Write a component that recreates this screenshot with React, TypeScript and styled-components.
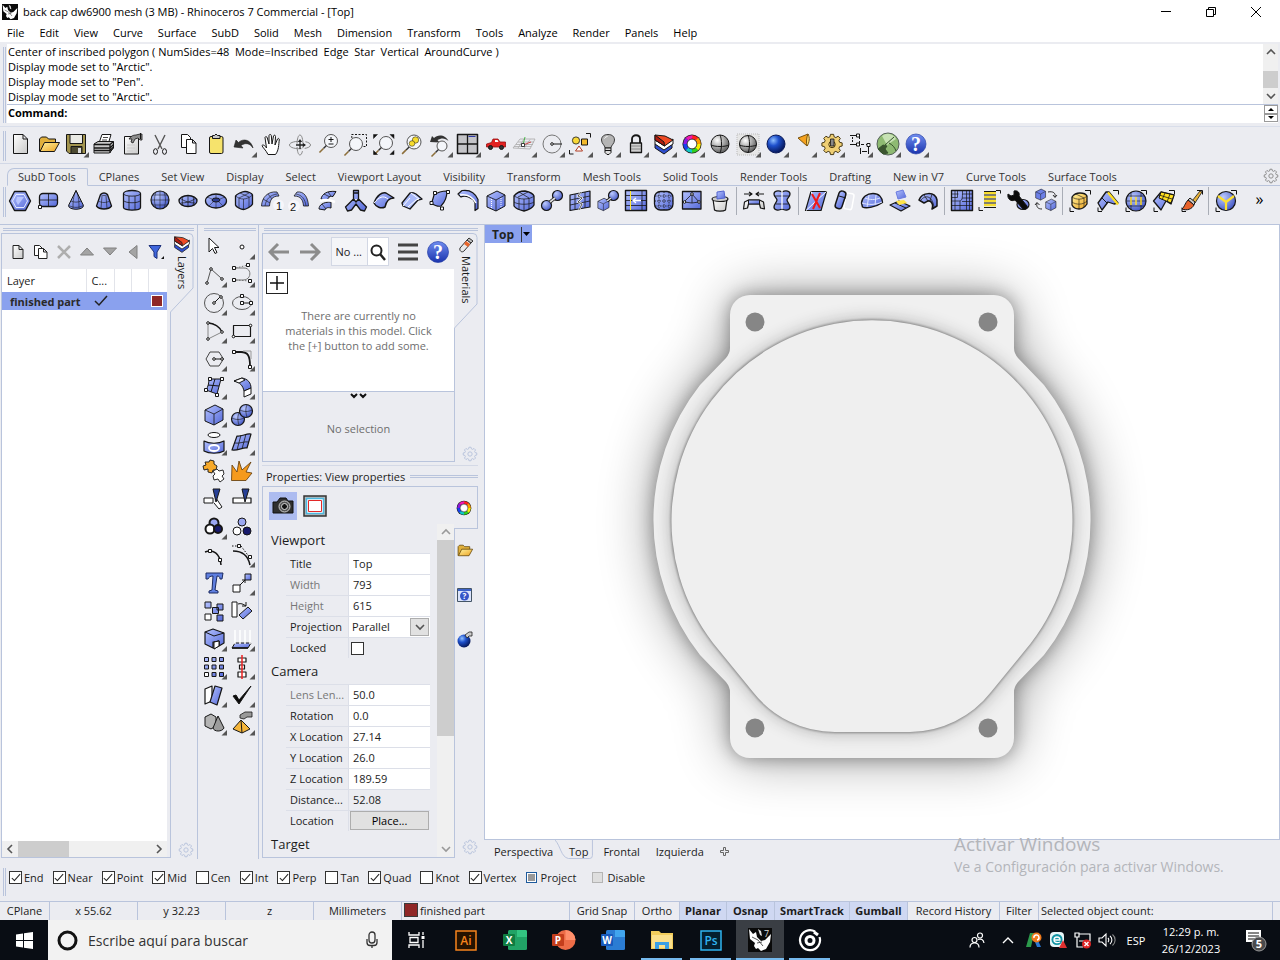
import React, { ReactNode } from 'react';
import styled, { createGlobalStyle, css } from 'styled-components';

const face = '#ebecf1';
const line = '#b9c4dc';
const ink = '#1c1c1c';
const accent = '#8aa1ee';

const GlobalStyle = createGlobalStyle`
  *, *::before, *::after { box-sizing: border-box; }
  body {
    margin: 0;
    background: ${face};
    color: ${ink};
    font-family: 'Open Sans', 'Noto Sans', sans-serif;
    font-size: 11px;
    line-height: 15px;
  }
  button, input, select {
    font: inherit;
    color: inherit;
    margin: 0;
    padding: 0;
    border: 0;
    background: none;
    border-radius: 0;
  }
  table { border-collapse: collapse; }
`;

/* ---------- drawings ---------- */

const B = 'url(#blue)';
const Y = 'url(#yellow)';
const G = 'url(#grey)';
const W = '#fff';

const SharedDefs = () => (
  <HiddenSvg aria-hidden="true">
    <defs>
      <linearGradient id="blue" x1="0" y1="0" x2="1" y2="1">
        <stop offset="0" stopColor="#b4c2ff" />
        <stop offset="1" stopColor="#5468d8" />
      </linearGradient>
      <linearGradient id="yellow" x1="0" y1="0" x2="1" y2="1">
        <stop offset="0" stopColor="#fff3a0" />
        <stop offset="1" stopColor="#eda321" />
      </linearGradient>
      <linearGradient id="grey" x1="0" y1="0" x2="1" y2="1">
        <stop offset="0" stopColor="#ffffff" />
        <stop offset="1" stopColor="#c9c9c9" />
      </linearGradient>
      <radialGradient id="ball" cx=".35" cy=".3" r=".75">
        <stop offset="0" stopColor="#bccaff" />
        <stop offset="1" stopColor="#4256c4" />
      </radialGradient>
      <radialGradient id="deep" cx=".35" cy=".3" r=".75">
        <stop offset="0" stopColor="#8fc0ff" />
        <stop offset=".4" stopColor="#1e50cc" />
        <stop offset="1" stopColor="#04124f" />
      </radialGradient>
      <radialGradient id="chrome" cx=".35" cy=".3" r=".8">
        <stop offset="0" stopColor="#ffffff" />
        <stop offset="1" stopColor="#4c4c4c" />
      </radialGradient>
      <linearGradient id="help" x1="0" y1="0" x2="0" y2="1">
        <stop offset="0" stopColor="#6f8df0" />
        <stop offset="1" stopColor="#1b34ad" />
      </linearGradient>
    </defs>
  </HiddenSvg>
);

const Corners = () => <path d="M17 1.500h5.500v4M2 18.500v4h4" stroke="#111" fill="none" />;

const Handle = ({ x, y }: { x: number; y: number }) => (
  <rect x={x - 1.5} y={y - 1.5} width="3" height="3" fill={W} />
);

const Dot = ({ x, y }: { x: number; y: number }) => <circle cx={x} cy={y} r="1.300" fill={W} />;

const wheelColours = ['#ff2020', '#ff9a00', '#f4f000', '#30d020', '#10c8c8', '#1840f0', '#8a18e0', '#f018b0'];
const Wheel = ({ r = 8 }: { r?: number }) => (
  <g>
    <circle cx="12" cy="12" r={r + 2.6} fill="#222" stroke="none" />
    <circle cx="12" cy="12" r={r - 2} fill={W} stroke="none" />
    {wheelColours.map((c, i) => {
      const a = (i * Math.PI) / 4 - Math.PI / 2;
      const b = a + Math.PI / 4 + 0.04;
      return (
        <path
          key={c}
          d={`M${12 + r * Math.cos(a)} ${12 + r * Math.sin(a)}A${r} ${r} 0 0 1 ${12 + r * Math.cos(b)} ${12 + r * Math.sin(b)}`}
          stroke={c}
          strokeWidth="3.600"
        />
      );
    })}
    <circle cx="12" cy="12" r={r - 2.2} strokeWidth=".7" />
  </g>
);

const Cube = ({ x = 0, y = 0, k = 1, fill = B }: { x?: number; y?: number; k?: number; fill?: string }) => (
  <g transform={`translate(${x} ${y}) scale(${k})`}>
    <path d="M3 7l10-5 8 4v11l-9 5-9-4z" fill={fill} />
    <path d="M3 7l9 4 9-5M12 11v11" strokeWidth=".8" />
  </g>
);

const Lens = ({ x, y, r = 6 }: { x: number; y: number; r?: number }) => (
  <g>
    <circle cx={x} cy={y} r={r} fill="#f4f6fa" stroke="#555" />
    <path d={`M${x - r * 0.7} ${y + r * 0.7}l-3 3`} stroke="#333" strokeWidth="1.400" />
    <path d={`M${x - r * 0.7 - 3} ${y + r * 0.7 + 3}l-4 4`} stroke="#8d6f3a" strokeWidth="1.600" />
  </g>
);

const Question = ({ r = 10.5 }: { r?: number }) => (
  <g>
    <circle cx="12" cy="12" r={r} fill="url(#help)" stroke="#2a42a8" strokeWidth=".7" />
    <text x="12" y="19" textAnchor="middle" fontFamily="Liberation Serif, serif" fontWeight="700" fontSize="20" fill={W} stroke="none">?</text>
  </g>
);

const Folder = () => (
  <g>
    <path d="M3.500 18.500V6l2-2h5l2 2h7v4" fill="#e0b03c" />
    <path d="M4 18.500l4.500-9H23.500l-5 9z" fill={Y} />
  </g>
);

const Cog = ({ fill = 'none', stroke = '#888' }: { fill?: string; stroke?: string }) => (
  <g fill={fill} stroke={stroke}>
    <path d="M10.300 2h3.400l.6 2.700 1.900.8 2.400-1.500 2.400 2.400-1.500 2.400.8 1.900 2.700.6v3.400l-2.700.6-.8 1.900 1.500 2.400-2.400 2.400-2.400-1.500-1.900.8-.6 2.700h-3.400l-.6-2.700-1.900-.8-2.400 1.500-2.400-2.400 1.500-2.400-.8-1.900L1 14.700v-3.400l2.700-.6.8-1.900L3 6.400 5.400 4l2.400 1.500 1.900-.8z" />
    <circle cx="12" cy="13" r="3.500" />
  </g>
);

const icons: Record<string, ReactNode> = {
  /* main toolbar */
  'New': <path d="M5.500 1.500h9.500l4.500 4.500v14.500h-14zM15 1.500V6h4.500" fill={G} />,
  'Open': <Folder />,
  'Save': (
    <g>
      <path d="M2.500 1.500h19v19H5l-2.500-2.500z" fill="#a3954e" />
      <path d="M6 1.500h12.500v9H6z" fill="#e9e9e4" />
      <path d="M7 13.500h11v7H7z" fill="#4d4a32" />
      <path d="M14 15h3v5h-3z" fill="#ddd" stroke="none" />
    </g>
  ),
  'Print': (
    <g>
      <path d="M7 10l3-8.500h9L16.500 10z" fill={W} />
      <path d="M11 4.500h5M10 7h5" strokeWidth=".8" />
      <path d="M2 11l4-2.500h15.500V15l-4 5H2z" fill="#c9c9c9" />
      <path d="M2 11.500h16v8.500M18 11.500l3.500-3M2 15h16l3.500-3.500M2 17.500h16l3.500-3.500" strokeWidth="1.300" />
    </g>
  ),
  'Document properties': (
    <g>
      <path d="M4.500 3.500h14v17.500h-14z" fill={G} />
      <path d="M7 12h8M7 15h8M7 18h6" stroke="#ccc" />
      <path d="M9 6c2-3 4-4 7-4l4-1h2v6h-2l-2-2-3 1-2 4-2-1 1-3z" fill="#8d8d8d" strokeWidth=".8" />
      <path d="M20.500 0v6" />
    </g>
  ),
  'Cut': (
    <g>
      <path d="M7 2l7 14M17 2l-7 14" strokeWidth="1.400" stroke="#555" />
      <ellipse cx="7.500" cy="18.500" rx="2" ry="2.800" />
      <ellipse cx="16.500" cy="18.500" rx="2" ry="2.800" />
    </g>
  ),
  'Copy': (
    <g>
      <path d="M5.500 1.500h6l3 3v10h-9z" fill={W} />
      <path d="M10.500 6.500h6l3.500 3.500v10.500h-9.500zM16.500 6.500V10h3.500" fill={W} />
    </g>
  ),
  'Paste': (
    <g>
      <rect x="5.500" y="3.500" width="13.500" height="17" rx="1.500" fill="#f6e36c" />
      <path d="M8.500 5.500v-3h2l1.500-1.500 1.500 1.500h2.500v3z" fill="#c8c8c8" />
    </g>
  ),
  'Undo': <path d="M2 14l2-7 2.500 2.500C11 5 19 6.500 21 15c-3-5-8-5.500-12-2.500L11 15z" fill="#333" stroke="#222" strokeWidth=".6" />,
  'Pan': (
    <path d="M8 21.500C6 17 2.500 14.500 2 12.500c1-1.200 3 0 4.500 2.500L5 4.500c.5-1.500 2-1 2.300.5L9 11V2.500c.4-1.500 2-1.300 2.300 0L12 11l1.500-8c.5-1.300 2-1 2 .5L15 12l2.500-6c.7-1 2-.6 1.800.8C18.500 12 19 17 15.500 21.500z" fill={W} />
  ),
  'Rotate view': (
    <g stroke="#888">
      <path d="M1.500 12c0-5 21-5 21 0s-21 5-21 0M12 2c4 0 4 20 0 20s-4-20 0-20" strokeDasharray="14 3" />
      <path d="M12 8v8M8 12h9" stroke="#222" strokeWidth="1.300" />
      <path d="M12 6l-2 3h4zM18 12l-3-2v4z" fill="#222" stroke="none" />
    </g>
  ),
  'Zoom dynamic': <g><Lens x={15} y={8} r={6.5} /><path d="M12.500 6.500h5M15 4v5M12.500 11h5" /></g>,
  'Zoom window': <g><path d="M7.500 1.500h15v12H9z" strokeDasharray="2 1.500" /><Lens x={12} y={11} r={6.5} /></g>,
  'Zoom extents': (
    <g>
      <Lens x={14} y={10} r={6.5} />
      <path d="M1.500 1.500h4l-4 4zM22 1.500h-4l4 4zM1.500 21.500v-4l4 4zM22 21.500h-4l4-4z" fill="#111" strokeWidth=".5" />
    </g>
  ),
  'Zoom selected': <g><Lens x={14} y={9} r={7} /><circle cx="15.500" cy="7" r="3.200" fill="#f7dc2e" strokeWidth=".5" /><circle cx="12" cy="10.500" r="2.800" fill="#f7dc2e" strokeWidth=".5" /></g>,
  'Undo view change': (
    <g>
      <path d="M2 9l2-6 2 2C10 .5 18 2 20.500 8c-3-3-7-3.500-11-1l2 2.500z" fill="#333" stroke="none" />
      <Lens x={14} y={13} r={5} />
    </g>
  ),
  'Four viewports': (
    <g>
      <path d="M1.500 1.500h20v19h-20z" fill="#c4c4c8" strokeWidth="1.500" />
      <path d="M11.500 1.500v19M1.500 11h20" strokeWidth="1.300" />
      <path d="M12.500 3.500h7" stroke="#2f3aa8" />
    </g>
  ),
  'Named views': (
    <g>
      <path d="M2.500 14v-3l5-1.500L9 6h5l2 3h5.500v5z" fill="#e32222" stroke="#941010" strokeWidth=".8" />
      <path d="M11 7h2.500l1 2H11z" fill={W} stroke="none" />
      <circle cx="6.500" cy="14.500" r="2" fill="#333" /><circle cx="17.500" cy="14.500" r="2" fill="#333" />
    </g>
  ),
  'Set CPlane': (
    <g stroke="#aaa" strokeWidth=".8">
      <path d="M1 15L8 6h15l-5 10zM4 11.500h17M6 15l6-9M12 15.500l6-9M2 13.500h17M6 9h16" />
      <path d="M11 12l8-3" stroke="#c22" /><path d="M11 12l2-8" stroke="#2a2" />
      <rect x="9.500" y="10.500" width="3" height="3" fill={W} stroke="#111" />
    </g>
  ),
  'Snap centre': <g><circle cx="12" cy="11" r="9" stroke="#777" /><path d="M13 11h9" /><Dot x={12} y={11} /></g>,
  'Select': (
    <g>
      <path d="M18 .500h4.500v4M1.500 17v4h4" />
      <circle cx="8" cy="7.500" r="3.600" fill="#f8d838" strokeWidth=".8" />
      <path d="M13.500 6h6v6h-6z" fill="#f2b92c" />
      <path d="M7.500 18l3.500-5 3.500 5z" fill={W} stroke="#b03a22" />
    </g>
  ),
  'Hide': (
    <g>
      <path d="M9 15c0-3-3.500-4-3.500-8C5.500 3.500 8 1.500 12 1.500S18.500 3.500 18.500 7c0 4-3.500 5-3.500 8z" fill="#b4b4b4" strokeWidth=".8" />
      <path d="M9 15h6v4.500l-2 2h-2l-2-2zM9 17.500h6" fill="#ddd" />
      <path d="M8.500 5.500c.5-1 1.500-1.800 3-2" stroke={W} />
    </g>
  ),
  'Lock': (
    <g>
      <path d="M8 10V6c0-5 8-5 8 0v4" strokeWidth="1.800" />
      <path d="M6.500 10h11v9.500h-11z" fill="#cfcfcf" strokeWidth="1.300" />
      <path d="M7 13h10M7 16h10" stroke="#888" />
    </g>
  ),
  'Layers': (
    <g>
      <path d="M3 11l9 4 8-6v6l-8 6-9-6z" fill="#2e4fd0" />
      <path d="M3 7l9 5 9-6v5l-9 6-9-6z" fill={W} />
      <path d="M3 2l10 1 8 4-8.500 6L3 7z" fill="#f04a24" />
      <path d="M3 2l9 7 .5 4L3 7z" fill="#b01c10" />
    </g>
  ),
  'Colour wheel': <g transform="translate(0 -1)"><Wheel r={7} /></g>,
  'Shade': <g><circle cx="12" cy="11" r="9" fill="url(#chrome)" /><path d="M3 12c4 2 14 2 18 0M12 2c2 4 2 14 0 18" /></g>,
  'Render preview': (
    <g>
      <path d="M1 1h22v21H1z" fill="#e6e6e6" stroke="#bbb" strokeDasharray="1 1" />
      <circle cx="12" cy="11" r="8.500" fill="url(#chrome)" /><path d="M3.500 12c4 2 13 2 17 0M12 2.500c2 4 2 13 0 17" />
    </g>
  ),
  'Render': <circle cx="12" cy="11" r="9" fill="url(#deep)" stroke="#0a1a5a" />,
  'Spotlight': <g><path d="M6 5l10-4-1 12z" fill="#f6a21e" stroke="#7a5310" /><path d="M16 1c2 3 1.500 9-1 12-1-3-.5-9 1-12z" fill="#ffdf70" stroke="#7a5310" /></g>,
  'Options': (
    <g>
      <g transform="translate(1 -.5) scale(.92)"><Cog fill="#efcf74" stroke="#3a2c08" /></g>
      <path d="M10.500 6h3.500v7h-3.500z" fill="#888" strokeWidth=".8" />
    </g>
  ),
  'Dimensions': (
    <g>
      <path d="M2 2.500h6M2 11.500h6" /><path d="M4.500 4v6" strokeDasharray="2 1" />
      <path d="M11.500 3v8.500H20" strokeDasharray="3 2" />
      <path d="M12.500 15v6M20.500 14v7M14 18.500h5" />
      <Handle x={10} y={2.5} /><Handle x={10} y={11.5} /><Handle x={20.5} y={12} />
    </g>
  ),
  'Grasshopper': (
    <g>
      <circle cx="12" cy="11" r="11" fill="#8eba72" stroke="#55605a" />
      <path d="M6 3a9 9 0 0 1 14 3l-9 6z" fill="#c7e2b4" stroke="none" />
      <path d="M2 16l5-4 4 1-2 3 3 4-5 1z" stroke="#33502a" fill="#3b5530" strokeWidth=".9" />
      <path d="M9 12l9-8M13 10c4 2 6 5 7 8" stroke="#33502a" />
    </g>
  ),
  'Help': <g transform="translate(0 -1)"><Question r={10} /></g>,

  /* SubD toolbar */
  'SubD face': (
    <g>
      <path d="M6.500 2.500h11L22.500 12l-5 9.500h-11L1.500 12z" fill={B} strokeWidth="1.400" />
      <path d="M8 5.500h8l3.500 6.500-3.500 6.500H8L4.500 12z" stroke="#e6ebff" />
      <path d="M9 8h7l-6 8-2-4z" fill="#b9c6ff" stroke="none" />
    </g>
  ),
  'SubD plane': <g><rect x="3.500" y="4.500" width="18" height="13" rx="3.500" fill={B} strokeWidth="1.300" /><path d="M12.500 4.500v13M3.500 11h18" strokeWidth=".8" /><Handle x={4} y={18} /></g>,
  'SubD cone': <g><path d="M12 1.500l7.500 15c0 5-15 5-15 0z" fill={B} /><path d="M12 1.500c-3 6-3 12-3 18M12 1.500c3 6 3 12 3 18M7 12c3 1.500 7 1.500 10 0M5 16.500c4 2.500 10 2.500 14 0" strokeWidth=".6" /></g>,
  'SubD truncated cone': <g><path d="M8.500 5.500c2-2 5-2 7 0l4 11.500c-3 4-12 4-15 0z" fill={B} strokeWidth="1.300" /><path d="M8.500 5.500c2 1.500 5 1.500 7 0M10 7l-1 12.500M14 7l1 12.500M6.500 12c3 2 8 2 11 0" strokeWidth=".6" /></g>,
  'SubD cylinder': <g><path d="M3.500 4.500c0-4 17-4 17 0v14c0 3.500-17 3.500-17 0z" fill={B} strokeWidth="1.300" /><path d="M3.500 4.500c0 3.500 17 3.500 17 0M3.500 11.500c2 3 15 3 17 0M9 7v14M15 7v14" strokeWidth=".8" /></g>,
  'SubD sphere': <g><circle cx="12" cy="11" r="9" fill="url(#ball)" strokeWidth="1.200" /><path d="M3 11h18M12 2v18M8 3c-2 5-2 11 0 16M16 3c2 5 2 11 0 16M5 6h14M5 16h14" strokeWidth=".5" /></g>,
  'SubD ellipsoid': <g><ellipse cx="12" cy="12" rx="9" ry="5.500" fill={B} strokeWidth="1.300" /><path d="M4 9c5 4 11 5 15 5M20 9c-5 4-11 5-15 5M12 6.500v11M7 7c-1 3-1 7 0 9.500M17 7c1 3 1 7 0 9.500" strokeWidth=".7" /></g>,
  'SubD torus': <g><ellipse cx="12" cy="12" rx="10.500" ry="7" fill={B} strokeWidth="1.300" /><ellipse cx="12" cy="11" rx="4" ry="2" fill="#2a3a90" /><path d="M12 13v6M3 8l5 2M21 8l-5 2M5 17l4-4M19 17l-4-4M12 5v4" strokeWidth=".5" /></g>,
  'SubD box': <g><path d="M3.500 7c1-2 7-4.500 9.500-4.500S20 4 20.500 6v9c-.5 2-6.500 5.500-9 5.500S4 18 3.500 16z" fill={B} strokeWidth="1.300" /><path d="M3.500 7c3 2 5 3 8 3s7-2 9-4M11.500 10v10.500M8 4l9 4v10M17 4L7 9v10" strokeWidth=".6" /></g>,
  'SubD degree one': (
    <g>
      <path d="M1.500 17C2 8 8 2 17 3l2 4c-7 0-9 4-9.500 10z" fill={B} strokeWidth=".8" /><path d="M5 17C6 10 10 6 17 5M3 10l7 4M8 5l4 5" strokeWidth=".6" />
      <circle cx="18.500" cy="16" r="5.500" fill="#f6f6fa" stroke="none" />
      <text x="16" y="21" fontSize="11" fill="#111" stroke="none" fontFamily="Liberation Sans, sans-serif">1</text>
    </g>
  ),
  'SubD degree two': (
    <g>
      <path d="M20.500 17C20 8 16 2 9 3L6 7c7 0 9 4 9.500 10z" fill={B} strokeWidth=".8" /><path d="M18 17C17 10 14 6 8 5" strokeWidth=".6" />
      <circle cx="6" cy="17" r="6" fill="#f6f6fa" stroke="none" />
      <text x="2" y="22" fontSize="11" fill="#111" stroke="none" fontFamily="Liberation Sans, sans-serif">2</text>
    </g>
  ),
  'SubD display': <g><path d="M5 10C6 5 11 1.500 20 2.500l-3 5c-4-.5-5 1-5.500 4z" fill={B} /><path d="M3 20c0-4 4-7 12-7v6c-4-1-5 0-6 2z" fill={B} /><path d="M4 12c6-2 10-1 15 1" stroke={W} strokeWidth="2.500" /><path d="M8 5l6 3M12 3l3 4M6 15l4 5" strokeWidth=".7" /></g>,
  'SubD multipipe': <path d="M9.500 1.500h5V10l8 8-2 4-4-1-4.500-6-4.500 6-4 1-2-4 8-8zM9.500 4h5M9.500 10l2.500 3 2.500-3" fill={B} strokeWidth="1.300" />,
  'SubD loft': <g><path d="M2 14C5 6 10 3 14 4l8 5c-6 0-8 4-9 9-4 2-9 0-11-4z" fill={B} strokeWidth="1.400" /><path d="M2 14c5-6 9-8 14-4" stroke={W} /></g>,
  'SubD sweep': <g><path d="M2 14l8-10c2-1 4 0 6 1l6 5-4 1-8 9-7-3z" fill="#a9b9f8" strokeWidth="1.300" /><path d="M10 9l-7 8M11 4l8 6-3 1-8 7" stroke={W} /></g>,
  'SubD edge': <g><path d="M6 6c4-3 9-4 13-4 0 7-2 11-6 15-3 1-7-1-10-3 2-2 2-5 3-8z" fill={B} strokeWidth="1.200" /><Handle x={7} y={4} /><Handle x={20} y={3} /><Handle x={3.5} y={14} /><Handle x={14} y={19.5} /></g>,
  'SubD revolve': <g><path d="M2 5l4-3.500c7-1 13 2 16 9v9l-3 2v-8C16 8 9 6 5 8z" fill={B} strokeWidth="1.200" /><path d="M4 6c6-1 12 1 16 8" stroke={W} strokeWidth="1.500" /></g>,
  'Box primitive': <g><Cube /><path d="M7.500 10v9M17 9v9" stroke={W} strokeDasharray="1 1" /></g>,
  'SubD subdivide': <g><path d="M2 7c3-4 7-5 11-5 5 1 8 2 9 5v9c-2 4-6 5-10 6-5-1-8-2-10-5z" fill={B} strokeWidth="1.300" /><path d="M2 7c4 2 6 3 10 3s8-1 10-3M12 10v12M7 9v11M17 9v11M2 13c4 3 16 3 20 0M7 3l10 6M16 3L6 8" strokeWidth=".7" /></g>,
  'SubD bridge': <g><circle cx="6.500" cy="16.500" r="5" fill="url(#ball)" strokeWidth="1.200" /><circle cx="17.500" cy="6.500" r="5" fill="url(#ball)" strokeWidth="1.200" /><path d="M10 13l5-4" stroke="#111" strokeWidth="3.500" /><path d="M10 13l5-4" stroke="#ddd" strokeWidth="1.800" /></g>,
  'SubD stitch': <g><path d="M2 6l20-4v16L2 21.500z" fill={B} strokeWidth="1.200" /><path d="M2 11l20-4M2 16l20-4M7 5v15.500M17 3v16" strokeWidth=".8" /><path d="M13 3l-3 4 4 2-4 4 4 2-3 6" stroke="#eee" strokeWidth="2" /><path d="M13 3l-3 4 4 2-4 4 4 2-3 6" strokeWidth=".7" /></g>,
  'SubD append': <g><g transform="translate(0 8)"><Cube k={0.62} /></g><circle cx="17.500" cy="6.500" r="5" fill="url(#ball)" strokeWidth="1.200" /><path d="M11 12l4-3" stroke="#111" strokeWidth="3" /><path d="M11 12l4-3" stroke="#ddd" strokeWidth="1.500" /></g>,
  'Insert edge': <g><path d="M1.500 1.500h21v20h-21z" fill={B} strokeWidth="1.400" /><path d="M1.500 6.500h21M1.500 11.500h21M1.500 16.500h21M18 1.500v20" strokeWidth=".8" /><path d="M6.500 2v19" stroke="#ffe838" /><path d="M17 11.500H9M12 9l-3 2.500 3 2.500" stroke={W} strokeWidth="1.300" /></g>,
  'Insert point': <g><rect x="2.500" y="2.500" width="18.500" height="18.500" rx="6" fill={B} strokeWidth="1.300" /><path d="M7 3v18M12 2.500V21M17 3v18M3 7h18M2.500 12H21M3 17h18" strokeDasharray="1.500 1" strokeWidth=".8" /></g>,
  'Crease': <g><path d="M2.500 2.500H21V20H2.500z" fill={B} strokeWidth="1.300" /><path d="M12 5l7 8-7 1-8-1zM12 5v9" strokeWidth=".8" /><Dot x={12} y={5} /><Dot x={19} y={13} /><Dot x={4.5} y={13} /></g>,
  'Delete faces': <g><path d="M5 10l1.500 11c2 1.500 9 1.500 11 0L19 10z" fill={G} strokeWidth="1.200" /><ellipse cx="12" cy="10" rx="8" ry="2.500" fill="#ccc" strokeWidth="1.200" /><path d="M9 3l7-1 1 7-8 1z" fill={B} stroke="#5364cf" /></g>,
  'Bridge gap': <g><path d="M2 5h7M22 5h-7M7 3l3 2-3 2M17 3l-3 2 3 2" strokeWidth="1.200" /><path d="M1.500 20l1-7 4-2h11l4 2 1 7-4-1-1-4H6.500l-1 4z" fill={G} strokeWidth="1.200" /><path d="M6.500 11h11v4h-11z" fill={B} /></g>,
  'Symmetry': <g><path d="M4 5c0-3 4-4 8-2 4-2 8-1 8 2s-3 4-3 6 3 4 3 7-4 4-8 2c-4 2-8 1-8-2s3-5 3-7-3-3-3-6z" fill={B} strokeWidth="1.300" /><path d="M5 7h14M6 15h12" strokeWidth=".8" /><path d="M12 2v18" stroke={W} strokeWidth="1.300" /></g>,
  'Delete face': <g><path d="M7 2.500h15.500L17 21.500H1.500z" fill={B} strokeWidth="1.200" /><path d="M7 2.500L12 12l10.500-9.500M12 12L2 21.500" stroke={W} /><path d="M8 5l8 14M16 4L9 20" stroke="#f01818" strokeWidth="2" /></g>,
  'Thicken': <g><rect x="13" y="4" width="8" height="16" rx="2" transform="rotate(10 15 12)" stroke={W} strokeWidth="1.500" /><rect x="5" y="2" width="7" height="18" rx="3" transform="rotate(18 9 11)" fill={B} strokeWidth="1.500" /><path d="M7 7l7 2" /></g>,
  'Smooth': <g><path d="M1.500 14C2 8 7 4.500 13 4.500s9.500 4 9.500 9C16 18 6 20 2.500 18z" fill={B} strokeWidth="1.400" /><path d="M2 14c6 2 14 2 20-1M9 6l-2 12M16 6l-1 10M5 9c5 2 10 2 15 0" stroke="#dfe6ff" /></g>,
  'Extract': <g><path d="M2 16l9-4 11 5-9 5z" fill={B} strokeWidth="1.200" /><path d="M7 14l11 5" /><path d="M8 12l8-1 3 3-8 2z" fill="#ffe44a" stroke="none" /><path d="M8 3l7-2 3 7-8 2z" fill={B} stroke="#6b7be0" /></g>,
  'Offset': <g><path d="M3 11C6 3 19 2 21 11v6l-5 3c2-6-2-10-6-7l-2 1z" fill={B} strokeWidth="1.500" /><path d="M5 11c4-5 11-5 13 7M8 6l4 6M16 5l-2 7" stroke="#222" strokeWidth=".8" /></g>,
  'Quad remesh': <g><path d="M1.500 1.500h21v20h-21z" fill={B} strokeWidth="1.400" /><path d="M1.500 16.500h21M1.500 12h7c4 0 4-2 4-10.500M1.500 8.500h6V1.500M5 1.500v20M16.500 1.500v20M10 12v10M19.500 1.500v20M1.500 5h7M12 9h10M12 5h10M12 12.500h10" strokeWidth=".7" /></g>,
  'Select list': <g><path d="M18 1.500h4.500v3M1 18v3.500h4" /><path d="M6 4h12M6 8h12M6 12h12M6 16h12" stroke="#f7dd30" strokeWidth="2.400" /><path d="M6 2.500h12M6 6h12M6 10h12M6 14h12M6 18.500h12" /></g>,
  'Repair': <g><ellipse cx="17" cy="15.500" rx="6" ry="5" fill={B} strokeWidth="1.200" /><path d="M2 5l3 2 3-1V2c4-1 6 2 5 5l8 10c1 3-2 4-4 3L9 11C5 13 1 10 2 5z" fill="#0b0b0b" /></g>,
  'Convert': <g><g transform="translate(0 -1)"><Cube k={0.55} fill="#6c7fe6" /></g><g transform="translate(10 9)"><Cube k={0.57} /></g><path d="M14 3c5-1 8 1 7 5M19 6l2 2.500L23 6M8 20c-4 0-6-2-5-6M1 16l2-2.500L5.500 16" strokeWidth=".9" /></g>,
  'Select SubD': <g><Corners /><path d="M4 8c2-3 5-4 8-4s6 1 7 3v8c-2 3-5 5-8 5s-6-2-7-4z" fill={Y} strokeWidth="1.300" /><path d="M4 8c4 3 11 3 15-1M11 10v10M4 13c4 3 11 3 15-1M8 5l8 4v9" strokeWidth=".6" /></g>,
  'Select edges': <g><Corners /><path d="M2 14L10 3h3l9 11-4 1-6-2-6 8z" fill={B} strokeWidth="1.300" /><path d="M12 3.500l10 12" stroke="#ffdf20" strokeWidth="2.200" /><path d="M6 9l5 5" /></g>,
  'Select faces': <g><Corners /><circle cx="12" cy="12" r="10" fill="url(#ball)" strokeWidth="1.200" /><path d="M2 12h20M3 7h18M3 17h18M7 3v18M17 3v18" strokeWidth=".6" /><path d="M7 8v8M12 8v8M17 8v8" stroke="#ffe030" strokeWidth="1.500" /></g>,
  'Select loop': <g><Corners /><path d="M1.500 12L9 3l13 3-3 9-5-3-5 9z" fill={B} strokeWidth="1.300" /><path d="M9 3l13 3-3 8-12-5z" fill="#ffdf20" /><path d="M7 6l13 4M13 4l-3 7M18 5l-3 8" strokeWidth=".8" /></g>,
  'Select brush': <g><Corners /><path d="M12 12l8-10 2 1-7 11z" fill="#e8b23a" strokeWidth=".8" /><path d="M8 11l6 5 1-3-5-4z" fill="#c8c8c8" /><path d="M2 20c2-1 3-6 6-9l6 5c-2 4-7 6-12 4z" fill="#e8622a" /></g>,
  'Select ring': <g><Corners /><circle cx="12" cy="12" r="9.500" fill="url(#ball)" strokeWidth="1.200" /><path d="M12 21v-8L4 7M12 13l8-6" stroke="#ffe030" strokeWidth="2.200" /></g>,

  /* side palette */
  'Pointer': <path d="M9 4v14l3.500-3.500 2.500 5 2-1-2.500-5h4.500z" fill={W} transform="translate(-2 -1)" />,
  'Point': <circle cx="12" cy="12" r="2" fill={W} />,
  'Polyline': <g><path d="M5 20l4-14 10 9" stroke="#555" /><Dot x={5} y={20} /><Dot x={9} y={6} /><Dot x={20} y={16} /></g>,
  'Curve': <g><path d="M4 5h10c8 0 8 12-1 12H4" stroke="#777" /><path d="M6 5l12-3M6 17l14 1" strokeDasharray="1.500 1.500" stroke="#777" /><Handle x={4} y={5} /><Handle x={18} y={2} /><Handle x={4} y={17} /><Handle x={20} y={18} /></g>,
  'Circle': <g><circle cx="12" cy="12" r="9.500" stroke="#555" /><path d="M12 12l6-6" /><Dot x={12} y={12} /><Dot x={19} y={6} /></g>,
  'Ellipse': <g><ellipse cx="12" cy="12" rx="9.500" ry="6.500" stroke="#555" /><path d="M12 12h9" /><Handle x={12} y={12} /><Handle x={12} y={5} /><Handle x={21} y={12} /></g>,
  'Arc': <g><path d="M6 20V4c6 0 12 4 14 9z" stroke="#888" /><path d="M6 4c6 0 12 4 14 9" strokeWidth="1.300" /><Dot x={6} y={4} /><Dot x={20} y={13} /><Dot x={6} y={20} /></g>,
  'Rectangle': <g><path d="M3.500 6.500h17v11h-17z" strokeWidth="1.200" /><Dot x={20.5} y={6.5} /><Dot x={3.5} y={17.5} /></g>,
  'Polygon': <g><path d="M8 5h9l4.500 7-4.500 7H8l-4-7z" stroke="#444" /><path d="M12 12h9" /><Dot x={12} y={12} /><Dot x={20} y={12} /></g>,
  'Fillet curves': <g><path d="M4 5h7c7 0 9 4 9 14" strokeWidth="1.800" /><path d="M13 4h8v8" stroke="#999" /><Handle x={4} y={5} /><Handle x={20} y={20} /></g>,
  'Surface from points': <g><path d="M7 4h12l-4 15-11-4c2-3 3-7 3-11z" fill={B} /><path d="M13 4l-4 13M6 10l11 1" /><Handle x={8} y={4} /><Handle x={20} y={4} /><Handle x={4} y={15} /><Handle x={15} y={20} /></g>,
  'Fillet surface': <g><path d="M4 6l8-3c6 1 9 5 9 10l-7 3C13 11 10 7 4 6z" fill={B} /><path d="M4 6l8-3 3 2-6 3zM21 13v6l-7 3v-6z" fill={W} /></g>,
  'Box': <Cube />,
  'Boolean union': <g><circle cx="8" cy="16" r="6.500" fill="url(#ball)" strokeWidth="1.200" /><circle cx="16" cy="8" r="6.500" fill="url(#ball)" strokeWidth="1.200" /><path d="M2 15c4 2 8 2 12 0M10 7c4 2 8 2 12 0M9 10c-2 4-1 9 0 12M17 2c-2 4-1 9 0 12" strokeWidth=".6" /></g>,
  'Project to surface': <g><ellipse cx="12" cy="4" rx="6" ry="2.500" fill={W} /><path d="M2 10c5 3 15 3 20 0v10c-5 3-15 3-20 0z" fill={B} strokeWidth="1.200" /><ellipse cx="12" cy="17" rx="5" ry="3" stroke={W} strokeWidth="1.800" /></g>,
  'Mesh': <g><path d="M7 5c5 1 9-3 14-2l-4 14c-4-1-9 3-15 2z" fill={B} strokeWidth="1.200" /><path d="M4 12c6 1 10-2 15-1M11 4L7 19M16 3l-4 15" strokeWidth=".8" /></g>,
  'Join': <g><path d="M3 3h4l1-2 4 1v3l3 2-1 4h-3l-1 3-4-1v-3l-4 1-1-4 3-1z" fill="#f6a92a" strokeWidth=".9" /><path d="M11 12l4-2 2 2 4-1 1 4-2 2 2 3-4 3-2-3-4 1-1-4 2-2z" fill={W} strokeWidth=".9" /></g>,
  'Explode': <path d="M1.500 21.500L2 6l5 7 2-11 3 9 9-8-5 10 6 1-6 7.500z" fill="#f59a1c" stroke="#5c3606" strokeWidth=".8" />,
  'Trim': <g><path d="M2 11h9v5H2zM14 11l6 9-3 2-5-6" fill={W} /><path d="M11 2h7l-4 13z" fill="#263f96" /></g>,
  'Split': <g><path d="M3 11h18v5H3z" fill={W} strokeWidth="1.200" /><path d="M12 2h7l-4 13z" fill="#263f96" /></g>,
  'Group': <g><circle cx="12" cy="8" r="4.500" fill="#9ba8f2" strokeWidth="2" /><circle cx="8" cy="14" r="4.500" fill={W} strokeWidth="2" /><circle cx="16" cy="14" r="4" fill="#181a6c" strokeWidth="2" /></g>,
  'Ungroup': <g><circle cx="12" cy="7" r="4" fill="#9ba8f2" /><circle cx="7" cy="16" r="4" fill={W} /><circle cx="17" cy="16" r="4" fill="#181a6c" /></g>,
  'Edit points': <g><path d="M3 9c8-3 15 1 16 13" strokeWidth="1.500" /><Handle x={8} y={8} /><Handle x={18} y={17} /></g>,
  'Control points': <g><path d="M3 8c9 0 15 4 17 14" strokeWidth="1.500" /><path d="M2 3h9l9 12" strokeDasharray="1.500 1.500" /><Handle x={9} y={3} /><Handle x={20} y={14} /></g>,
  'Text': <path d="M4 2h17l-1 6h-2c0-2-1-3-3-3l-2 14 3 1v2H7v-2l3-1 1-14C8 5 7 6 6 8H4z" fill="#5f7fe0" stroke="#1c2a60" />,
  'Move': <g><path d="M3 14h7v7H3z" fill={W} /><path d="M15 3h6v6h-6z" fill={B} /><path d="M10 14l5-5M12 9h3v3" /></g>,
  'Copy objects': <g fill={B}><path d="M3 3h6v6H3zM15 5h6v6h-6zM10.500 8.500h6v6h-6zM15 16h6v6h-6z" /><path d="M3 15h6v6H3z" fill={W} /></g>,
  'Rotate': <g><path d="M2 3h5v15H2z" fill={W} /><path d="M9 16l9-8 4 4-9 8z" fill={B} /><path d="M8 5c3-1 5 0 8 2M16 3v4h-4" /></g>,
  'Boolean': <g><path d="M3 5l8-3 11 4v10l-5 3v-5l-6 1v6l-8-4z" fill={B} strokeWidth="1.200" /><path d="M3 5l9 4 10-3M12 15l5-1v5l-5 3z" /><path d="M12 15l5-1v5l-5 3z" fill={W} /></g>,
  'Extrude': <g><path d="M5 16h16l-3 5H2z" fill={B} /><path d="M5 3v14M10 3v14M15 3v14M20 3v14" stroke={W} strokeWidth="1.500" /><path d="M2 21h16" strokeWidth="1.600" /></g>,
  'Array': <g fill={B}><path d="M2.500 2.500h4v4h-4zM10 2.500h4v4h-4zM17.500 2.500h4v4h-4zM2.500 10h4v4h-4zM10 10h4v4h-4zM17.500 10h4v4h-4zM10 17.500h4v4h-4zM17.500 17.500h4v4h-4z" /><path d="M2.500 17.500h4v4h-4z" fill={W} /></g>,
  'Align': <g><path d="M8 3h8v4H8zM9.500 10h5v4h-5zM8 17h8v5H8z" fill={W} strokeWidth="1.200" /><path d="M12 0v24" stroke="#e22" strokeWidth="1.500" /></g>,
  'Orient': <g><path d="M3 6l7-3v15l-7 3z" fill={W} strokeWidth="1.200" /><path d="M13 3l7 2-5 17-7-3z" fill={B} strokeWidth="1.200" /></g>,
  'Check': <path d="M3 13l3-1 3 5L21 3 9 21z" fill="#0a0a0a" />,
  'Solids': <g><path d="M3 6l6-3 5 3v9l-5 3-6-3z" fill="#b4b4b4" /><path d="M16 5l6 12c-2 4-10 4-11 0z" fill="#9c9c9c" /></g>,
  'Render material': <g><path d="M3 18l8-9 9 9-8 4z" fill="#f4b53a" /><path d="M11 9l1 13" /><path d="M10 4l5-3h7v5h-5l-3 2-4-1z" fill="#999" strokeWidth=".8" /></g>,
};

const iconSize = css`
  width: 28px;
  height: 28px;
  display: block;
`;
const HiddenSvg = styled.svg`
  position: absolute;
  width: 0;
  height: 0;
`;
const IconButton = styled.button`
  ${iconSize}
  flex: none;
  &:hover { background: #dbe1f6; }
`;
const IconSvg = styled.svg`${iconSize}`;

const Tool = ({ name, menu }: { name: string; menu?: boolean }) => (
  <IconButton type="button" aria-label={name}>
    <IconSvg viewBox="-2 -2 28 28" fill="none" stroke="#161616" strokeLinejoin="round">
      {icons[name]}
      {menu && <path d="M25 19v5.500h-5.500z" fill="#555" stroke="none" />}
    </IconSvg>
  </IconButton>
);

/* ---------- window frame ---------- */

const Page = styled.div`
  position: relative;
  display: flex;
  flex-direction: column;
  min-height: 100vh;
  background: ${face};
`;
const TitleBar = styled.header`
  display: flex;
  align-items: center;
  height: 23px;
  padding: 0 2px;
  gap: 5px;
  background: #fff;
  color: #000;
`;
const WindowTitle = styled.h1`
  flex: 1;
  margin: 0;
  font-size: 11px;
  font-weight: 400;
`;
const CaptionRow = styled.div`
  display: flex;
`;
const CaptionButton = styled.button`
  width: 45px;
  height: 20px;
  display: grid;
  place-items: center;
`;
const MenuBar = styled.nav`
  display: flex;
  gap: 1px;
  height: 19px;
  background: #fff;
  color: #000;
`;
const MenuItem = styled.button`
  padding: 0 7px;
`;

const CommandArea = styled.section`
  display: flex;
  margin-top: 2px;
  height: 79px;
  padding: 0 2px 0 3px;
`;
const GripBar = styled.div`
  width: 3px;
  margin: 3px 1px 0 0;
  border: solid ${line};
  border-width: 0 1px;
`;
const CommandBody = styled.div`
  flex: 1;
  background: #fff;
  display: flex;
  flex-direction: column;
  color: #000;
`;
const HistoryRow = styled.div`
  display: flex;
  border-bottom: 1px solid ${line};
  height: 61px;
`;
const History = styled.ol`
  flex: 1;
  list-style: none;
  margin: 0;
  padding: 0 1px;
  white-space: pre;
`;
const PromptRow = styled.div`
  display: flex;
  flex: 1;
`;
const PromptLabel = styled.label`
  flex: 1;
  display: flex;
  gap: 4px;
  padding: 0 1px;
  font-weight: 700;
`;
const PromptInput = styled.input`
  flex: 1;
  outline: none;
  height: 15px;
`;
const ScrollTrack = styled.div<{ $wide?: number; $row?: boolean }>`
  display: flex;
  flex: none;
  flex-direction: ${(p) => (p.$row ? 'row' : 'column')};
  align-items: center;
  ${(p) => (p.$row ? 'height: 16px;' : `width: ${p.$wide ?? 15}px;`)}
  background: #f0f0f0;
`;
const ScrollThumb = styled.div<{ $length: number; $row?: boolean }>`
  background: #cdcdcd;
  flex: none;
  ${(p) => (p.$row ? `width: ${p.$length}px; height: 100%;` : `height: ${p.$length}px; width: 100%;`)}
`;
const ScrollSpace = styled.div`
  flex: 1;
`;
const ArrowBox = styled.button`
  width: 16px;
  height: 16px;
  display: grid;
  place-items: center;
`;
const Stepper = styled.div`
  width: 14px;
  display: flex;
  flex-direction: column;
  margin-bottom: 1px;
`;
const StepButton = styled.button`
  flex: 1;
  display: grid;
  place-items: center;
  border: 1px solid #9a9a9a;
`;

const Chevron = ({ dir, colour = '#555' }: { dir: 'up' | 'down' | 'left' | 'right'; colour?: string }) => {
  const d = { up: 'M1 7l4-4 4 4', down: 'M1 3l4 4 4-4', left: 'M7 1L3 5l4 4', right: 'M3 1l4 4-4 4' }[dir];
  return (
    <svg width="10" height="10" fill="none" stroke={colour} strokeWidth="1.600"><path d={d} /></svg>
  );
};

/* ---------- toolbars ---------- */

const ToolArea = styled.div`
  display: flex;
  flex-direction: column;
  margin-top: 3px;
`;
const ToolStrip = styled.div`
  display: flex;
  align-items: flex-start;
  height: 37px;
  padding: 4px 3px 0;
  border-top: 1px solid #d9deea;
  overflow: hidden;
`;
const SubdStrip = styled(ToolStrip)`
  height: 38px;
  padding-top: 1px;
  border-top: 0;
`;
const StripGrip = styled.div`
  flex: none;
  width: 3px;
  height: 30px;
  border: solid ${line};
  border-width: 0 1px;
`;
const StripSeparator = styled.div`
  flex: none;
  width: 6px;
  height: 28px;
  background: linear-gradient(#a9adb6, #a9adb6) 2px 0 / 1px 100% no-repeat;
`;
const MoreButton = styled.button`
  width: 40px;
  height: 24px;
  margin-left: 2px;
  font-size: 16px;
  color: #000;
`;
const TabStrip = styled.div`
  display: flex;
  align-items: flex-end;
  height: 23px;
  padding-left: 7px;
  border-top: 1px solid #d2d8e6;
`;
const StripTab = styled.button<{ $active?: boolean }>`
  height: 18px;
  padding: 0 11px;
  color: #333;
  border-bottom: 1px solid ${line};
  ${(p) =>
    p.$active &&
    css`
      border: 1px solid ${line};
      border-bottom-color: transparent;
      border-radius: 7px 2px 0 0;
      padding: 0 11px 2px 10px;
    `}
`;
const TabFill = styled.div`
  flex: 1;
  height: 18px;
  display: flex;
  justify-content: flex-end;
  align-items: flex-start;
  padding-right: 1px;
  border-bottom: 1px solid ${line};
`;

/* ---------- docked panels ---------- */

const Workspace = styled.main`
  display: flex;
  flex: 1;
  min-height: 630px;
`;
const Dock = styled.aside<{ $width: number; $padRight: number }>`
  flex: none;
  display: flex;
  flex-direction: column;
  width: ${(p) => p.$width}px;
  padding: 3px ${(p) => p.$padRight}px 1px 1px;
  border-top: 1px solid ${line};
`;
const GripLine = styled.div`
  flex: none;
  height: 3px;
  margin: 0 0 2px 2px;
  border: solid ${line};
  border-width: 1px 0;
`;
const PanelRow = styled.div<{ $height?: number }>`
  display: flex;
  min-height: 0;
  ${(p) => (p.$height ? `flex: none; height: ${p.$height}px;` : 'flex: 1;')}
`;
const Panel = styled.section<{ $padRight?: number }>`
  flex: 1;
  min-width: 0;
  display: flex;
  flex-direction: column;
  border: 1px solid ${line};
  border-right: 0;
  padding-right: ${(p) => p.$padRight ?? 0}px;
`;
const SideTabs = styled.div`
  width: 24px;
  flex: none;
  display: flex;
  flex-direction: column;
`;
const SideTab = styled.button<{ $height: number }>`
  position: relative;
  height: ${(p) => p.$height}px;
  display: flex;
  align-items: center;
  gap: 2px;
  padding: 3px 0 0;
  writing-mode: vertical-rl;
  text-align: left;
`;
const SideTabShape = styled.svg`
  position: absolute;
  inset: 0;
  width: 100%;
  height: 100%;
`;
const SideRest = styled.div`
  flex: 1;
  display: flex;
  align-items: flex-end;
  justify-content: flex-end;
  border-left: 1px solid ${line};
`;
const PanelTools = styled.div`
  display: flex;
  align-items: center;
  height: 35px;
  padding-left: 5px;
  gap: 1px;
`;
const SmallTool = styled.button`
  width: 22px;
  height: 22px;
  display: grid;
  place-items: center;
`;
const LayerTable = styled.table`
  width: 100%;
  table-layout: fixed;
  background: #fff;
`;
const ColFixed = styled.col<{ $w: number }>`
  width: ${(p) => p.$w}px;
`;
const LayerHead = styled.th`
  height: 23px;
  padding: 0 5px;
  font-weight: 400;
  text-align: left;
  border-right: 1px solid #e2e4ea;
  &:last-child { border-right: 0; }
`;
const LayerCell = styled.td<{ $pad?: number }>`
  height: 18px;
  padding: 0 0 0 ${(p) => p.$pad ?? 0}px;
  background: ${accent};
  font-weight: 700;
  white-space: nowrap;
  color: #2a2a2a;
`;
const CheckMark = styled.svg`
  display: block;
`;
const WhiteFill = styled.div`
  flex: 1;
  background: #fff;
`;
const Swatch = styled.span`
  display: block;
  width: 12px;
  height: 12px;
  flex: none;
  background: #8f2727;
  border: 1px solid #3a3a3a;
`;
const WhiteSwatch = styled(Swatch)`
  border-color: #fff;
  margin-left: 3px;
`;

const Palette = styled.aside`
  flex: none;
  width: 62px;
  padding: 3px 2px 0 4px;
  border: solid ${line};
  border-width: 1px 1px 0 1px;
`;
const PaletteGrid = styled.div`
  display: grid;
  grid-template-columns: 28px 28px;
  grid-auto-rows: 28px;
  margin-left: -2px;
`;
const Inset = styled.div`
  flex: 1;
  display: flex;
  flex-direction: column;
  min-height: 0;
  margin-left: 2px;
`;

const SearchBox = styled.div`
  display: flex;
  align-items: center;
  width: 58px;
  height: 29px;
  border: 1px solid #d2d7e4;
  background: #fff;
`;
const SearchInput = styled.input`
  width: 36px;
  height: 27px;
  padding-left: 4px;
  background: #f4f5f8;
  border-right: 1px solid #d2d7e4;
  &::placeholder { color: #222; opacity: 1; }
`;
const MaterialTools = styled.div`
  display: flex;
  align-items: center;
  justify-content: space-between;
  height: 35px;
  padding: 0 5px;
`;
const FlatButton = styled.button`
  display: grid;
  place-items: center;
`;
const MaterialList = styled.div`
  height: 123px;
  padding: 3px;
  background: #fff;
  border-bottom: 1px solid ${line};
`;
const AddButton = styled.button`
  display: grid;
  place-items: center;
  width: 22px;
  height: 22px;
  border: 1px solid #222;
`;
const EmptyNote = styled.p`
  margin: 14px 13px 0;
  text-align: center;
  color: #6e6e6e;
`;
const Preview = styled.div`
  flex: 1;
  display: flex;
  flex-direction: column;
  align-items: center;
  gap: 19px;
  color: #6e6e6e;
`;
const PanelHeading = styled.div`
  flex: none;
  display: flex;
  align-items: center;
  gap: 5px;
  height: 21px;
  margin: 3px 0 0;
  padding: 1px 0 0 4px;
  border-top: 1px solid #d4d9e6;
`;
const HeadingText = styled.h2`
  margin: 0;
  font-size: 11px;
  font-weight: 400;
`;
const HeadingGrip = styled.div`
  flex: 1;
  height: 3px;
  border: solid ${line};
  border-width: 1px 0;
`;
const PageTools = styled.div`
  display: flex;
  align-items: center;
  gap: 6px;
  height: 37px;
  padding-left: 6px;
`;
const PageTool = styled.button<{ $active?: boolean }>`
  display: grid;
  place-items: center;
  width: ${(p) => (p.$active ? 28 : 24)}px;
  height: 28px;
  background: ${(p) => (p.$active ? '#adbcf0' : 'none')};
`;
const PropScroll = styled.div`
  display: flex;
  flex: 1;
  min-height: 0;
`;
const PropList = styled.div`
  flex: 1;
  min-width: 0;
  overflow: hidden;
  padding: 3px 7px 0 8px;
`;
const GroupTitle = styled.h3`
  margin: 0;
  height: 26px;
  font-size: 13px;
  font-weight: 400;
  line-height: 26px;
`;
const PropRow = styled.div`
  display: grid;
  grid-template-columns: 63px minmax(0, 1fr);
  height: 21px;
  margin-left: 15px;
  border-top: 1px solid #dcdfe8;
`;
const PropLabel = styled.label<{ $dim?: boolean }>`
  padding-left: 4px;
  line-height: 20px;
  white-space: nowrap;
  border-right: 1px solid #dcdfe8;
  color: ${(p) => (p.$dim ? '#777' : ink)};
`;
const PropInput = styled.input<{ $flat?: boolean }>`
  min-width: 0;
  width: 100%;
  height: 20px;
  padding: 0 0 2px 4px;
  background: ${(p) => (p.$flat ? 'transparent' : '#fff')};
`;
const SelectWrap = styled.div`
  display: flex;
  background: #fff;
  position: relative;
`;
const PropSelect = styled.select`
  appearance: none;
  width: 100%;
  height: 20px;
  padding: 0 0 2px 3px;
`;
const SelectArrow = styled.span`
  position: absolute;
  right: 1px;
  top: 1px;
  width: 19px;
  height: 18px;
  display: grid;
  place-items: center;
  background: #e1e1e1;
  border: 1px solid #adadad;
  pointer-events: none;
`;
const PlaceButton = styled.button`
  margin: 0 1px;
  height: 19px;
  background: #e1e1e1;
  border: 1px solid #adadad;
  color: #000;
`;
const PropCheckCell = styled.div`
  display: flex;
  align-items: center;
  padding-left: 2px;
`;
const PropTabIcons = styled.div`
  flex: 1;
  display: flex;
  flex-direction: column;
  align-items: flex-start;
  gap: 28px;
  padding: 14px 0 0 2px;
  border-left: 1px solid ${line};
`;
const PropTabActive = styled.div`
  height: 43px;
  display: grid;
  place-items: center;
  border: solid ${line};
  border-width: 1px 1px 1px 0;
  padding-right: 3px;
`;
const GearEnd = styled.div`
  margin-top: auto;
  align-self: flex-end;
`;

/* ---------- viewport ---------- */

const ViewColumn = styled.section`
  flex: 1;
  min-width: 0;
  display: flex;
  flex-direction: column;
`;
const Viewport = styled.div`
  position: relative;
  flex: 1;
  min-height: 0;
  background: #fff;
  border: 1px solid ${line};
`;
const ViewTitle = styled.button`
  position: absolute;
  left: 0;
  top: 0;
  display: flex;
  align-items: center;
  height: 18px;
  padding-left: 7px;
  background: ${accent};
  font-weight: 700;
  font-size: 12px;
  color: #222;
`;
const ViewTitleArrow = styled.span`
  display: grid;
  place-items: center;
  width: 11px;
  height: 15px;
  margin-left: 7px;
  border-left: 1px solid #333;
`;
const Scene = styled.svg`
  position: absolute;
  inset: 0;
  width: 100%;
  height: 100%;
`;
const ViewTabs = styled.div`
  display: flex;
  height: 19px;
  padding-left: 2px;
`;
const ViewTab = styled.button<{ $active?: boolean }>`
  position: relative;
  padding: 3px 8px 0;
  height: 20px;
  ${(p) =>
    p.$active &&
    css`
      margin: 0 2px 0 -6px;
      padding: 3px 5px 0 14px;
    `}
`;
const ViewTabEdge = styled.svg`
  position: absolute;
  inset: 0;
  width: 100%;
  height: 100%;
`;

const ModelScene = () => (
  <Scene viewBox="485 225 794 614" role="img" aria-label="Top view of back cap model">
    <defs>
      <filter id="wide" x="-40%" y="-40%" width="180%" height="180%"><feGaussianBlur stdDeviation="28" /></filter>
      <filter id="tight" x="-20%" y="-20%" width="140%" height="140%"><feGaussianBlur stdDeviation="9" /></filter>
      <filter id="rim" x="-15%" y="-15%" width="130%" height="130%"><feGaussianBlur stdDeviation="9" /></filter>
      <filter id="edge" x="-10%" y="-10%" width="120%" height="120%"><feGaussianBlur stdDeviation="1" /></filter>
      <path
        id="cap"
        d="M750 295H994A20 20 0 0 1 1014 315V348Q1014 353 1018 358L1044 385A219 219 0 0 1 1044 655L1018 682Q1014 687 1014 692V738A20 20 0 0 1 994 758H750A20 20 0 0 1 730 738V692Q730 687 726 682L700 655A219 219 0 0 1 700 385L726 358Q730 353 730 348V315A20 20 0 0 1 750 295Z"
      />
      <path id="dome" d="M835 732H910A104 104 0 0 0 991 692L1031 643A200.500 200.500 0 1 0 713 643L753 692A104 104 0 0 0 835 732Z" />
      <clipPath id="capClip"><use href="#cap" /></clipPath>
    </defs>
    <use href="#cap" fill="#000" opacity=".38" filter="url(#wide)" />
    <use href="#cap" fill="#000" opacity=".36" filter="url(#tight)" />
    <use href="#cap" fill="#f0f0f0" />
    <g clipPath="url(#capClip)">
      <use href="#dome" fill="#333" opacity=".36" filter="url(#rim)" />
      <use href="#dome" fill="#8c8c8c" stroke="#8c8c8c" strokeWidth="2" filter="url(#edge)" />
    </g>
    <use href="#dome" fill="#efefef" />
    {[755, 988].map((x) => [322, 728].map((y) => <circle key={`${x}-${y}`} cx={x} cy={y} r="9.500" fill="#868686" />))}
  </Scene>
);

/* ---------- snap bar and status bar ---------- */

const SnapBar = styled.div`
  display: flex;
  align-items: flex-start;
  height: 42px;
  padding: 9px 3px 4px;
`;
const SnapGrip = styled(StripGrip)`
  height: 28px;
  margin-right: 3px;
`;
const SnapItem = styled.label<{ $wide?: boolean }>`
  display: flex;
  align-items: center;
  gap: ${(p) => (p.$wide ? 4 : 2)}px;
  height: 19px;
  margin-right: ${(p) => (p.$wide ? 16 : 9)}px;
`;
const Check = styled.input<{ $state?: 'mixed' | 'off' }>`
  appearance: none;
  display: grid;
  place-items: center;
  flex: none;
  width: 13px;
  height: 13px;
  background: #fff;
  border: 1px solid #333;
  &:checked::after {
    content: '';
    width: 4px;
    height: 9px;
    border: solid #222;
    border-width: 0 1px 1px 0;
    transform: translateY(-1px) rotate(42deg);
  }
  ${(p) =>
    p.$state === 'mixed' &&
    css`
      width: 11px;
      height: 11px;
      background: #999;
      border-color: #1d5a9c;
      box-shadow: inset 0 0 0 1px #fff;
    `}
  ${(p) =>
    p.$state === 'off' &&
    css`
      width: 11px;
      height: 11px;
      background: #dedede;
      border-color: #b4b4b4;
    `}
`;
const StatusBar = styled.div`
  display: flex;
  height: 19px;
  border-top: 1px solid ${line};
  padding-right: 7px;
`;
const StatusCell = styled.button<{ $width?: number; $on?: boolean; $left?: boolean }>`
  display: flex;
  align-items: center;
  justify-content: ${(p) => (p.$left ? 'flex-start' : 'center')};
  ${(p) => (p.$width ? `width: ${p.$width}px; flex: none;` : 'flex: 1;')}
  gap: 2px;
  padding: 0 0 2px ${(p) => (p.$left ? 2 : 0)}px;
  white-space: nowrap;
  border-right: 1px solid ${line};
  font-weight: ${(p) => (p.$on ? 700 : 400)};
  background: ${(p) => (p.$on ? '#cfd8f2' : 'none')};
`;
const StatusSwatch = styled(Swatch)`
  width: 14px;
  height: 14px;
`;

const Watermark = styled.div`
  position: absolute;
  right: 0;
  bottom: 83px;
  width: 326px;
  color: #b3b5ba;
  pointer-events: none;
`;
const WatermarkTitle = styled.div`
  font-size: 19px;
  line-height: 24px;
`;
const WatermarkText = styled.div`
  font-size: 14px;
  line-height: 21px;
`;

/* ---------- taskbar ---------- */

const TaskBar = styled.footer`
  display: flex;
  height: 40px;
  background: #090d14;
  color: #fff;
`;
const StartButton = styled.button`
  width: 48px;
  display: grid;
  place-items: center;
`;
const TaskSearch = styled.label`
  display: flex;
  align-items: center;
  gap: 9px;
  width: 344px;
  padding: 0 12px 0 8px;
  background: #f2f2f2;
  color: #333;
`;
const TaskSearchInput = styled.input`
  flex: 1;
  min-width: 0;
  font-size: 14px;
  &::placeholder { color: #333; opacity: 1; }
`;
const TaskApp = styled.button<{ $running?: boolean; $active?: boolean }>`
  width: ${(p) => (p.$active ? 48 : 41)}px;
  margin: 0 ${(p) => (p.$active ? 1 : 4)}px;
  display: grid;
  place-items: center;
  background: ${(p) => (p.$active ? '#3a3e44' : 'none')};
  border: solid ${(p) => (p.$running ? '#76b9ed' : 'transparent')};
  border-width: 0 0 2px;
  padding-top: 2px;
`;
const Tray = styled.div`
  display: flex;
  align-items: center;
  margin-left: auto;
`;
const TrayItem = styled.button<{ $width: number }>`
  width: ${(p) => p.$width}px;
  height: 40px;
  display: grid;
  place-items: center;
`;
const Clock = styled.time`
  width: 76px;
  text-align: center;
  line-height: 17px;
`;

/* ---------- data ---------- */

const menus = ['File', 'Edit', 'View', 'Curve', 'Surface', 'SubD', 'Solid', 'Mesh', 'Dimension', 'Transform', 'Tools', 'Analyze', 'Render', 'Panels', 'Help'];
const historyLines = [
  'Center of inscribed polygon ( NumSides=48  Mode=Inscribed  Edge  Star  Vertical  AroundCurve )',
  'Display mode set to "Arctic".',
  'Display mode set to "Pen".',
  'Display mode set to "Arctic".',
];
/* a trailing + marks a tool that opens a flyout */
const mainTools = ['New', 'Open', 'Save+', 'Print', 'Document properties', 'Cut', 'Copy', 'Paste', 'Undo+', 'Pan', 'Rotate view', 'Zoom dynamic', 'Zoom window', 'Zoom extents', 'Zoom selected', 'Undo view change+', 'Four viewports+', 'Named views+', 'Set CPlane+', 'Snap centre+', 'Select+', 'Hide+', 'Lock+', 'Layers+', 'Colour wheel+', 'Shade', 'Render preview+', 'Render+', 'Spotlight+', 'Options+', 'Dimensions+', 'Grasshopper+', 'Help+'];
const toolTabs = ['SubD Tools', 'CPlanes', 'Set View', 'Display', 'Select', 'Viewport Layout', 'Visibility', 'Transform', 'Mesh Tools', 'Solid Tools', 'Render Tools', 'Drafting', 'New in V7', 'Curve Tools', 'Surface Tools'];
const subdTools = ['SubD face', 'SubD plane', 'SubD cone', 'SubD truncated cone', 'SubD cylinder', 'SubD sphere', 'SubD ellipsoid', 'SubD torus', 'SubD box', 'SubD degree one', 'SubD degree two', 'SubD display', 'SubD multipipe', 'SubD loft', 'SubD sweep', 'SubD edge', 'SubD revolve', 'Box primitive', 'SubD subdivide', 'SubD bridge', 'SubD stitch', 'SubD append', 'Insert edge', 'Insert point', 'Crease', 'Delete faces', '|', 'Bridge gap', 'Symmetry', '|', 'Delete face', 'Thicken', 'Smooth', 'Extract', 'Offset', '|', 'Quad remesh', 'Select list', 'Repair', 'Convert', '|', 'Select SubD', 'Select edges', 'Select faces', 'Select loop', 'Select brush', '|', 'Select ring'];
const paletteTools = ['Pointer', 'Point+', 'Polyline+', 'Curve+', 'Circle+', 'Ellipse+', 'Arc+', 'Rectangle+', 'Polygon+', 'Fillet curves+', 'Surface from points+', 'Fillet surface+', 'Box+', 'Boolean union+', 'Project to surface+', 'Mesh+', 'Join', 'Explode', 'Trim', 'Split', 'Group+', 'Ungroup', 'Edit points', 'Control points+', 'Text', 'Move+', 'Copy objects', 'Rotate', 'Boolean+', 'Extrude+', 'Array+', 'Align+', 'Orient+', 'Check+', 'Solids+', 'Render material+'];

type Snap = { name: string; on?: boolean; state?: 'mixed' | 'off' };
const snaps: Snap[] = [
  { name: 'End', on: true }, { name: 'Near', on: true }, { name: 'Point', on: true }, { name: 'Mid', on: true },
  { name: 'Cen' }, { name: 'Int', on: true }, { name: 'Perp', on: true }, { name: 'Tan' }, { name: 'Quad', on: true },
  { name: 'Knot' }, { name: 'Vertex', on: true }, { name: 'Project', state: 'mixed' }, { name: 'Disable', state: 'off' },
];

type Prop = { label: string; value: string; dim?: boolean; flat?: boolean };
const sizeProps: Prop[] = [
  { label: 'Title', value: 'Top' },
  { label: 'Width', value: '793', dim: true },
  { label: 'Height', value: '615', dim: true },
];
const cameraProps: Prop[] = [
  { label: 'Lens Len...', value: '50.0', dim: true },
  { label: 'Rotation', value: '0.0' },
  { label: 'X Location', value: '27.14' },
  { label: 'Y Location', value: '26.0' },
  { label: 'Z Location', value: '189.59' },
  { label: 'Distance...', value: '52.08', flat: true },
];

const renderTools = (names: string[]) =>
  names.map((n, i) =>
    n === '|' ? <StripSeparator key={i} /> : <Tool key={i} name={n.replace('+', '')} menu={n.endsWith('+')} />,
  );

const PropField = ({ label, value, dim, flat }: Prop) => {
  const id = `prop-${label.replace(/\W/g, '')}`;
  return (
    <PropRow>
      <PropLabel htmlFor={id} $dim={dim}>{label}</PropLabel>
      <PropInput id={id} defaultValue={value} $flat={flat} />
    </PropRow>
  );
};

const Gear = ({ colour = '#b9c4dc' }: { colour?: string }) => (
  <svg width="16" height="16" viewBox="-1 0 26 26" strokeWidth="1.600"><Cog stroke={colour} /></svg>
);

const RhinoMark = ({ size }: { size: number }) => (
  <svg width={size} height={size} viewBox="0 0 24 24">
    <path d="M0 0h24v24H0z" fill="#0a0a0a" />
    <path d="M1 1l4 5 3-2 1 5 4 4 4-1 6-6-1 8-4 7-5 2-3-3-2 1-2-3 1-3-5-4z" fill="#fff" />
    <path d="M10 1l3 2 1 5-2-1z" fill="#ddd" />
    <path d="M4 9l6 3 5 6M9 15l5-1" stroke="#444" fill="none" strokeWidth=".9" />
  </svg>
);

const TaskViewIcon = () => (
  <svg width="18" height="18" fill="none" stroke="#fff" strokeWidth="1.300">
    <path d="M1 1v3h10V1M2 6.500h8v5H2zM1 17v-3h10v3M15 1v3M15 9v8" /><path d="M13.500 5h3v3h-3z" fill="#fff" stroke="none" />
  </svg>
);

const OfficeIcon = ({ letter, dark, mid, light, round }: { letter: string; dark: string; mid: string; light: string; round?: boolean }) => (
  <svg width="24" height="22">
    {round ? (
      <g><circle cx="13.500" cy="11" r="10" fill={mid} /><path d="M13.500 1a10 10 0 0 1 10 10h-10z" fill={light} /></g>
    ) : (
      <g><rect x="5" y="1" width="19" height="20" rx="1.500" fill={mid} /><path d="M14 1h8.500a1.500 1.500 0 0 1 1.500 1.500V8H14z" fill={light} /></g>
    )}
    <rect x="0" y="5" width="12" height="12" rx="1" fill={dark} />
    <text x="6" y="15" textAnchor="middle" fontSize="10" fontWeight="700" fill="#fff">{letter}</text>
  </svg>
);

const AdobeIcon = ({ text, colour, back }: { text: string; colour: string; back: string }) => (
  <svg width="22" height="21">
    <rect x="1" y="1" width="20" height="19" fill={back} stroke={colour} strokeWidth="1.500" />
    <text x="11" y="15" textAnchor="middle" fontSize="12" fontWeight="600" fill={colour}>{text}</text>
  </svg>
);

const LayersMark = () => <svg width="18" height="18" viewBox="1 1 22 22" stroke="#222" strokeLinejoin="round">{icons['Layers']}</svg>;
const GreyTriangle = ({ d }: { d: string }) => <svg width="16" height="16"><path d={d} fill="#a4a4a4" stroke="#808080" strokeLinejoin="round" /></svg>;

const App: React.FC = () => (
  <Page>
    <GlobalStyle />
    <SharedDefs />
    <TitleBar>
      <RhinoMark size={16} />
      <WindowTitle>back cap dw6900 mesh (3 MB) - Rhinoceros 7 Commercial - [Top]</WindowTitle>
      <CaptionRow>
        <CaptionButton type="button" aria-label="Minimize"><svg width="12" height="12" stroke="#000"><path d="M1 5.500h10" /></svg></CaptionButton>
        <CaptionButton type="button" aria-label="Restore"><svg width="12" height="12" fill="none" stroke="#000"><path d="M1.500 3.500h7v7h-7zM3.500 3V1.500h7v7H9" /></svg></CaptionButton>
        <CaptionButton type="button" aria-label="Close"><svg width="12" height="12" stroke="#000"><path d="M1 1l10 10M11 1L1 11" /></svg></CaptionButton>
      </CaptionRow>
    </TitleBar>
    <MenuBar>{menus.map((m) => <MenuItem type="button" key={m}>{m}</MenuItem>)}</MenuBar>

    <CommandArea>
      <GripBar />
      <CommandBody>
        <HistoryRow>
          <History>{historyLines.map((l, i) => <li key={i}>{l}</li>)}</History>
          <ScrollTrack $wide={15}>
            <ArrowBox type="button" aria-label="Scroll up"><Chevron dir="up" /></ArrowBox>
            <ScrollSpace />
            <ScrollThumb $length={17} />
            <ArrowBox type="button" aria-label="Scroll down"><Chevron dir="down" /></ArrowBox>
          </ScrollTrack>
        </HistoryRow>
        <PromptRow>
          <PromptLabel>Command:<PromptInput type="text" /></PromptLabel>
          <Stepper>
            <StepButton type="button" aria-label="Previous"><svg width="6" height="3"><path d="M0 3l3-3 3 3z" /></svg></StepButton>
            <StepButton type="button" aria-label="Next"><svg width="6" height="3"><path d="M0 0l3 3 3-3z" /></svg></StepButton>
          </Stepper>
        </PromptRow>
      </CommandBody>
    </CommandArea>

    <ToolArea>
      <ToolStrip><StripGrip />{renderTools(mainTools)}</ToolStrip>
      <TabStrip>
        {toolTabs.map((t, i) => <StripTab type="button" key={t} $active={i === 0}>{t}</StripTab>)}
        <TabFill><Gear colour="#8d8d8d" /></TabFill>
      </TabStrip>
      <SubdStrip><StripGrip />{renderTools(subdTools)}<MoreButton type="button" aria-label="More tools">»</MoreButton></SubdStrip>
    </ToolArea>

    <Workspace>
      <Dock $width={197} $padRight={3}>
        <GripLine />
        <PanelRow>
          <Panel $padRight={3}>
            <PanelTools>
              <SmallTool type="button" aria-label="New layer"><svg width="14" height="16" fill="url(#grey)" stroke="#222"><path d="M2 1.500h6l4 4v9H2zM8 1.500v4h4" /></svg></SmallTool>
              <SmallTool type="button" aria-label="New sublayer"><svg width="16" height="16" fill="#fff" stroke="#222"><path d="M1.500 1.500h5l3 3v7h-8z" /><path d="M5.500 4.500h5l3.500 3.500v6.500H5.500zM10.500 4.500V8H14" /></svg></SmallTool>
              <SmallTool type="button" aria-label="Delete layer"><svg width="16" height="16" stroke="#aeaeae" strokeWidth="2.500"><path d="M2 2l12 12M14 2L2 14" /></svg></SmallTool>
              <SmallTool type="button" aria-label="Move up"><GreyTriangle d="M1.500 11L8 4l6.500 7z" /></SmallTool>
              <SmallTool type="button" aria-label="Move down"><GreyTriangle d="M1.500 4L8 11l6.500-7z" /></SmallTool>
              <SmallTool type="button" aria-label="Move out"><GreyTriangle d="M12 1.500L4 8l8 6.500z" /></SmallTool>
              <SmallTool type="button" aria-label="Filter"><svg width="18" height="16" stroke="#1c2f78"><path d="M2 1.500h12L10 8v6.500l-3-2V8z" fill="#3f66dc" /><path d="M17 12v3h-3z" fill="#111" stroke="none" /></svg></SmallTool>
            </PanelTools>
            <LayerTable>
              <colgroup><col /><ColFixed $w={28} /><ColFixed $w={17} /><ColFixed $w={17} /><ColFixed $w={19} /></colgroup>
              <thead><tr><LayerHead>Layer</LayerHead><LayerHead>C...</LayerHead><LayerHead /><LayerHead /><LayerHead /></tr></thead>
              <tbody>
                <tr>
                  <LayerCell $pad={8}>finished part</LayerCell>
                  <LayerCell $pad={8}><CheckMark width="14" height="12" fill="none" stroke="#222" strokeWidth="1.500"><path d="M1 6l4 4 8-9" /></CheckMark></LayerCell>
                  <LayerCell /><LayerCell />
                  <LayerCell><WhiteSwatch /></LayerCell>
                </tr>
              </tbody>
            </LayerTable>
            <WhiteFill />
            <ScrollTrack $row>
              <ArrowBox type="button" aria-label="Scroll left"><Chevron dir="left" /></ArrowBox>
              <ScrollThumb $row $length={51} />
              <ScrollSpace />
              <ArrowBox type="button" aria-label="Scroll right"><Chevron dir="right" /></ArrowBox>
            </ScrollTrack>
          </Panel>
          <SideTabs>
            <SideTab type="button" $height={79}>
              <SideTabShape viewBox="0 0 24 79" preserveAspectRatio="none" fill="none" stroke={line}><path d="M0 .5h19q4 0 4 4V55L.5 79" /></SideTabShape>
              <LayersMark />
              <span>Layers</span>
            </SideTab>
            <SideRest><Gear /></SideRest>
          </SideTabs>
        </PanelRow>
      </Dock>

      <Palette>
        <GripLine />
        <PaletteGrid>{renderTools(paletteTools)}</PaletteGrid>
      </Palette>

      <Dock $width={225} $padRight={6}>
        <Inset>
          <GripLine />
          <PanelRow $height={229}>
            <Panel>
              <MaterialTools>
                <FlatButton type="button" aria-label="Back"><svg width="22" height="20" fill="none" stroke="#8c8c8c" strokeWidth="3"><path d="M21 10H3M10 2l-8 8 8 8" /></svg></FlatButton>
                <FlatButton type="button" aria-label="Forward"><svg width="22" height="20" fill="none" stroke="#8c8c8c" strokeWidth="3"><path d="M1 10h18M12 2l8 8-8 8" /></svg></FlatButton>
                <SearchBox>
                  <SearchInput aria-label="Search materials" placeholder="No ..." />
                  <FlatButton type="button" aria-label="Search"><svg width="20" height="18" fill="none" stroke="#222" strokeWidth="2"><circle cx="8.500" cy="7.500" r="5" /><path d="M12 11l5 6" strokeWidth="2.500" /></svg></FlatButton>
                </SearchBox>
                <FlatButton type="button" aria-label="Menu"><svg width="20" height="18" stroke="#444" strokeWidth="3"><path d="M0 2h20M0 9h20M0 16h20" /></svg></FlatButton>
                <FlatButton type="button" aria-label="Help"><svg width="22" height="22" viewBox="1 1 22 22"><Question /></svg></FlatButton>
              </MaterialTools>
              <MaterialList>
                <AddButton type="button" aria-label="Add material"><svg width="14" height="14" stroke="#111" strokeWidth="1.500"><path d="M7 0v14M0 7h14" /></svg></AddButton>
                <EmptyNote>There are currently no materials in this model. Click the [+] button to add some.</EmptyNote>
              </MaterialList>
              <Preview>
                <svg width="18" height="10" fill="none" stroke="#111" strokeWidth="2"><path d="M1 2l3 3 3-3M10 2l3 3 3-3" /></svg>
                <span>No selection</span>
              </Preview>
            </Panel>
            <SideTabs>
              <SideTab type="button" $height={95}>
                <SideTabShape viewBox="0 0 24 95" preserveAspectRatio="none" fill="none" stroke={line}><path d="M0 .5h19q4 0 4 4V71L.5 95" /></SideTabShape>
                <svg width="18" height="18" stroke="#333"><path d="M3 12l7-8 4 3-7 8c-2 2-5 0-4-3z" fill="#e9e9e9" /><path d="M10 4l2-2 4 3-2 2z" fill="#bbb" /><path d="M7 8l4 3 2-3-4-3z" fill="#e8662c" stroke="none" /></svg>
                <span>Materials</span>
              </SideTab>
              <SideRest><Gear /></SideRest>
            </SideTabs>
          </PanelRow>
          <PanelHeading><HeadingText>Properties: View properties</HeadingText><HeadingGrip /></PanelHeading>
          <PanelRow>
            <Panel>
              <PageTools>
                <PageTool type="button" $active aria-label="View page">
                  <svg width="22" height="18"><path d="M1 5h4l3-4h6l2 3h5v12H1z" fill="#2f2f2f" stroke="#111" /><circle cx="12.500" cy="9.500" r="5.500" fill="#555" stroke="#ccc" /><circle cx="12.500" cy="9.500" r="3" fill="#111" stroke="#ddd" /></svg>
                </PageTool>
                <PageTool type="button" aria-label="Viewport frame page">
                  <svg width="24" height="22" fill="none"><path d="M1 1h22v20H1z" fill="#b9b9b9" stroke="#333" strokeWidth="1.500" /><path d="M3.500 3.500h17v15h-17z" fill="#fff" stroke="#4cb8e0" strokeWidth="1.500" /><path d="M5.500 5.500h13v11h-13z" stroke="#e22828" /></svg>
                </PageTool>
              </PageTools>
              <PropScroll>
                <PropList>
                  <GroupTitle>Viewport</GroupTitle>
                  {sizeProps.map((p) => <PropField key={p.label} {...p} />)}
                  <PropRow>
                    <PropLabel htmlFor="projection">Projection</PropLabel>
                    <SelectWrap>
                      <PropSelect id="projection"><option>Parallel</option></PropSelect>
                      <SelectArrow><Chevron dir="down" /></SelectArrow>
                    </SelectWrap>
                  </PropRow>
                  <PropRow>
                    <PropLabel htmlFor="locked">Locked</PropLabel>
                    <PropCheckCell><Check type="checkbox" id="locked" /></PropCheckCell>
                  </PropRow>
                  <GroupTitle>Camera</GroupTitle>
                  {cameraProps.map((p) => <PropField key={p.label} {...p} />)}
                  <PropRow>
                    <PropLabel as="span">Location</PropLabel>
                    <PlaceButton type="button">Place...</PlaceButton>
                  </PropRow>
                  <GroupTitle>Target</GroupTitle>
                </PropList>
                <ScrollTrack $wide={17}>
                  <ArrowBox type="button" aria-label="Scroll up"><Chevron dir="up" colour="#999" /></ArrowBox>
                  <ScrollThumb $length={196} />
                  <ScrollSpace />
                  <ArrowBox type="button" aria-label="Scroll down"><Chevron dir="down" colour="#999" /></ArrowBox>
                </ScrollTrack>
              </PropScroll>
            </Panel>
            <SideTabs>
              <PropTabActive><svg width="16" height="16" viewBox="1 1 22 22" fill="none" stroke="#222"><Wheel r={7.5} /></svg></PropTabActive>
              <PropTabIcons>
                <svg width="16" height="16" viewBox="2 1 22 22" fill="none" stroke="#5a3c00"><Folder /></svg>
                <svg width="16" height="16"><path d="M.5 1.500h14v13H.5z" fill="#dbe4fb" stroke="#456" /><path d="M1 2h13v2H1z" fill="#3c62c8" /><circle cx="7.500" cy="9" r="4.500" fill="#3454c8" /><text x="7.500" y="12" fontSize="8" fontWeight="700" textAnchor="middle" fill="#fff">?</text></svg>
                <svg width="16" height="18"><circle cx="7" cy="10" r="6.500" fill="url(#deep)" /><path d="M8 4l4-3h3v4h-3l-2 2z" fill="#ccc" stroke="#222" strokeWidth=".8" /></svg>
                <GearEnd><Gear /></GearEnd>
              </PropTabIcons>
            </SideTabs>
          </PanelRow>
        </Inset>
      </Dock>

      <ViewColumn>
        <Viewport>
          <ModelScene />
          <ViewTitle type="button">Top<ViewTitleArrow><svg width="7" height="4"><path d="M0 0h7L3.500 4z" /></svg></ViewTitleArrow></ViewTitle>
        </Viewport>
        <ViewTabs>
          <ViewTab type="button">Perspectiva</ViewTab>
          <ViewTab type="button" $active>
            <ViewTabEdge viewBox="0 0 40 20" preserveAspectRatio="none" fill="none" stroke={line}><path d="M0 0c6 6 6 17 14 18.500h22q3 0 3-3V0" /></ViewTabEdge>
            Top
          </ViewTab>
          <ViewTab type="button">Frontal</ViewTab>
          <ViewTab type="button">Izquierda</ViewTab>
          <ViewTab type="button" aria-label="New viewport"><svg width="9" height="9" fill="none" stroke="#666"><path d="M3.500.5h2v3h3v2h-3v3h-2v-3h-3v-2h3z" /></svg></ViewTab>
        </ViewTabs>
      </ViewColumn>
    </Workspace>

    <SnapBar>
      <SnapGrip />
      {snaps.map((s) => (
        <SnapItem key={s.name} $wide={!!s.state}>
          <Check type="checkbox" defaultChecked={s.on} disabled={s.state === 'off'} $state={s.state} />
          {s.name}
        </SnapItem>
      ))}
    </SnapBar>

    <StatusBar>
      <StatusCell $width={50}>CPlane</StatusCell>
      <StatusCell $width={88}>x 55.62</StatusCell>
      <StatusCell $width={88}>y 32.23</StatusCell>
      <StatusCell $width={88}>z</StatusCell>
      <StatusCell $width={88}>Millimeters</StatusCell>
      <StatusCell $width={168} $left><StatusSwatch />finished part</StatusCell>
      <StatusCell $width={65}>Grid Snap</StatusCell>
      <StatusCell $width={45}>Ortho</StatusCell>
      <StatusCell $width={47} $on>Planar</StatusCell>
      <StatusCell $width={48} $on>Osnap</StatusCell>
      <StatusCell $width={75} $on>SmartTrack</StatusCell>
      <StatusCell $width={58} $on>Gumball</StatusCell>
      <StatusCell $width={92}>Record History</StatusCell>
      <StatusCell $width={39}>Filter</StatusCell>
      <StatusCell $left>Selected object count:</StatusCell>
    </StatusBar>

    <TaskBar>
      <StartButton type="button" aria-label="Start"><svg width="17" height="17" fill="#fff"><path d="M0 2.500l7-1V8H0zM8 1.300L17 0v8H8zM0 9h7v6.500l-7-1zM8 9h9v8l-9-1.300z" /></svg></StartButton>
      <TaskSearch>
        <svg width="23" height="23"><circle cx="11.500" cy="11.500" r="8.500" fill="none" stroke="#111" strokeWidth="3" /></svg>
        <TaskSearchInput type="search" placeholder="Escribe aquí para buscar" />
        <svg width="16" height="18" fill="none" stroke="#333" strokeWidth="1.300"><rect x="5" y="1" width="6" height="11" rx="3" /><path d="M3 8v3.500q0 3 3 3h4q3 0 3-3V8M8 14.500V17" /></svg>
      </TaskSearch>
      <TaskApp type="button" aria-label="Task view"><TaskViewIcon /></TaskApp>
      <TaskApp type="button" aria-label="Illustrator"><AdobeIcon text="Ai" colour="#f7841c" back="#261300" /></TaskApp>
      <TaskApp type="button" aria-label="Excel"><OfficeIcon letter="X" dark="#107c41" mid="#21a366" light="#33c481" /></TaskApp>
      <TaskApp type="button" aria-label="PowerPoint"><OfficeIcon letter="P" dark="#c43e1c" mid="#ed6c47" light="#ff8f6b" round /></TaskApp>
      <TaskApp type="button" aria-label="Word"><OfficeIcon letter="W" dark="#185abd" mid="#2b7cd3" light="#41a5ee" /></TaskApp>
      <TaskApp type="button" $running aria-label="File explorer">
        <svg width="22" height="20"><path d="M0 1h8l2 2h12v16H0z" fill="#f2cd5c" /><path d="M1 5h20v13H1z" fill="#fbe08c" /><path d="M4 19v-7h14v7h-4v-4H8v4z" fill="#3aa0e6" /></svg>
      </TaskApp>
      <TaskApp type="button" $running aria-label="Photoshop"><AdobeIcon text="Ps" colour="#2fb4f0" back="#04202f" /></TaskApp>
      <TaskApp type="button" $running $active aria-label="Rhinoceros 7">
        <svg width="24" height="24"><RhinoMark size={24} /><text x="16" y="9" fontSize="9" fill="#ddd">7</text></svg>
      </TaskApp>
      <TaskApp type="button" $running aria-label="Groove">
        <svg width="24" height="24" fill="none" stroke="#fff" strokeWidth="2.200"><path d="M17 3.500A10 10 0 1 0 21.500 9" /><circle cx="12" cy="12.500" r="4" strokeWidth="3" /><path d="M16 4l4 3" strokeWidth="3" /></svg>
      </TaskApp>
      <Tray>
        <TrayItem type="button" $width={34} aria-label="People"><svg width="16" height="16" fill="none" stroke="#fff" strokeWidth="1.200"><circle cx="5.500" cy="8" r="2.500" /><circle cx="11" cy="3.500" r="2.500" /><path d="M1 15.500c0-6 9-6 9 0M9 7.500c3-1 5.500 0 6 3.500" /></svg></TrayItem>
        <TrayItem type="button" $width={28} aria-label="Show hidden icons"><svg width="12" height="8" fill="none" stroke="#fff" strokeWidth="1.400"><path d="M1 7l5-5 5 5" /></svg></TrayItem>
        <TrayItem type="button" $width={24} aria-label="Autodesk"><svg width="16" height="16"><path d="M4 1h4L5 15H0z" fill="#2c9a4c" /><path d="M7 5l3-1 5 11h-4z" fill="#2a78d2" /><circle cx="10.500" cy="5.500" r="5" fill="#f07a1c" /><path d="M8 6a2.500 2.500 0 1 1 3 2" stroke="#fff" fill="none" strokeWidth="1.500" /></svg></TrayItem>
        <TrayItem type="button" $width={24} aria-label="Antivirus"><svg width="18" height="16"><rect x="1" y="0" width="14" height="15" rx="4" fill="#e8f6f8" /><circle cx="8" cy="7.500" r="5.500" fill="#1295a5" /><path d="M5 8h6c0-4-6-4-6 0 0 3 4 3 6 2" stroke="#fff" fill="none" strokeWidth="1.300" /><path d="M14 8l4 8h-8z" fill="#e03030" /></svg></TrayItem>
        <TrayItem type="button" $width={25} aria-label="Network"><svg width="18" height="17" fill="none" stroke="#fff" strokeWidth="1.200"><path d="M5 2h11v7H5M1 1h4v4H1zM3 5v10h6M9 12h4" /><circle cx="12.500" cy="12" r="4.500" fill="#e02424" stroke="none" /><path d="M10.500 10l4 4M14.500 10l-4 4" strokeWidth="1.400" /></svg></TrayItem>
        <TrayItem type="button" $width={24} aria-label="Volume"><svg width="18" height="16" fill="none" stroke="#fff" strokeWidth="1.100"><path d="M1 6h3l4-4v12l-4-4H1z" /><path d="M10 6c1 1 1 3 0 4M12 4c2.500 2 2.500 6 0 8" /><path d="M14.500 2.500c3.500 3 3.500 8 0 11" stroke="#888" /></svg></TrayItem>
        <TrayItem type="button" $width={34}>ESP</TrayItem>
        <Clock>12:29 p. m.<br />26/12/2023</Clock>
        <TrayItem type="button" $width={51} aria-label="Notifications">
          <svg width="24" height="24"><path d="M3 2h15v12h-6l-3 3v-3H3z" fill="#fff" /><path d="M5 5h11M5 8h11M5 11h7" stroke="#111" strokeWidth="1.200" /><circle cx="16" cy="16" r="7" fill="#4a4a4c" stroke="#999" /><text x="16" y="20" fontSize="11" fontWeight="700" textAnchor="middle" fill="#fff">5</text></svg>
        </TrayItem>
      </Tray>
    </TaskBar>

    <Watermark>
      <WatermarkTitle>Activar Windows</WatermarkTitle>
      <WatermarkText>Ve a Configuración para activar Windows.</WatermarkText>
    </Watermark>
  </Page>
);

export default App;
